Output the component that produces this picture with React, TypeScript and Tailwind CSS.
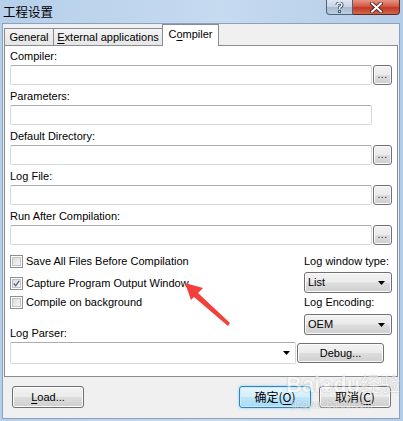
import React from "react";

const btn =
  "rounded-[3px] border border-[#707070] bg-[linear-gradient(#f2f2f2_0%,#ebebeb_48%,#dddddd_52%,#cfcfcf_100%)] shadow-[inset_0_0_0_1px_#fbfbfb]";
const box = "rounded-[2px] border border-[#d5d8dd] border-t-[#abadb3] bg-white";

const Label = ({ text, className = "" }: { text: string; className?: string }) => (
  <div className={`h-[14px] leading-[14px] whitespace-nowrap ${className}`}>{text}</div>
);

const Browse = () => (
  <div className={`${btn} w-[19px] h-[20px] flex items-end justify-center pb-[4px]`}>
    <span className="text-[10px] leading-none tracking-[0.5px] text-[#1a1a1a]">...</span>
  </div>
);

const Field = ({ label, browse = true, first = false }: { label: string; browse?: boolean; first?: boolean }) => (
  <div className={first ? "" : "mt-[4px]"}>
    <Label text={label} className="mb-[2px]" />
    <div className="flex gap-[1px]">
      <div className={`${box} w-[362px] h-[20px]`} />
      {browse && <Browse />}
    </div>
  </div>
);

const Check = ({ label, checked = false, className = "" }: { label: string; checked?: boolean; className?: string }) => (
  <div className={`flex items-center h-[14px] ${className}`}>
    <div className="w-[13px] h-[13px] border border-[#8e8f8f] bg-white p-[1px]">
      <div className="w-full h-full bg-[linear-gradient(135deg,#dcdcdc,#f6f6f6)] border border-[#c2c2c2] flex items-center justify-center">
        {checked && (
          <svg width="9" height="9" viewBox="0 0 9 9">
            <path d="M1 4.5 L3.5 7.5 L8 1" fill="none" stroke="#4a5f8f" strokeWidth="1.6" />
          </svg>
        )}
      </div>
    </div>
    <span className="ml-[3px] leading-[14px] whitespace-nowrap">{label}</span>
  </div>
);

const Arrow = () => (
  <svg width="7" height="4" viewBox="0 0 7 4">
    <path d="M0 0 H7 L3.5 4 Z" fill="#000" />
  </svg>
);

const Select = ({ value, className = "" }: { value: string; className?: string }) => (
  <div className={`${btn} w-[88px] h-[21px] flex items-center justify-between pl-[3px] pr-[6px] ${className}`}>
    <span className="leading-none">{value}</span>
    <Arrow />
  </div>
);

export default function App() {
  return (
    <div className="relative w-[403px] h-[421px] overflow-hidden bg-[linear-gradient(90deg,#b6cfea_0%,#c6daf0_55%,#b3cce8_100%)] text-[11px] text-black font-['Liberation_Sans',Arial,sans-serif]">
      {/* title bar */}
      <div className="h-[23px] flex justify-between pr-[3px]">
        <div className="pl-[3px] pt-[3px] text-[12.5px] leading-[17px] text-black font-['Noto_Sans_CJK_SC',sans-serif]">
          工程设置
        </div>
        <div className="flex h-[15px]">
          <div className="w-[27px] h-full rounded-bl-[4px] border border-t-0 border-[#4f627c] bg-[linear-gradient(#dfe7f0_0%,#c6d3e2_50%,#a9bbd0_52%,#bccde0_100%)] flex items-center justify-center">
            <svg width="9" height="11" viewBox="0 0 9 11">
              <path d="M2 3 Q2 1 4.5 1 Q7 1 7 3 Q7 4.5 4.5 5.5 L4.5 7" fill="none" stroke="#34465e" strokeWidth="3" />
              <path d="M2 3 Q2 1 4.5 1 Q7 1 7 3 Q7 4.5 4.5 5.5 L4.5 7" fill="none" stroke="#ffffff" strokeWidth="1.4" />
              <rect x="3" y="8" width="3" height="3" fill="#34465e" />
              <rect x="3.8" y="8.8" width="1.4" height="1.4" fill="#ffffff" />
            </svg>
          </div>
          <div className="w-[47px] h-full rounded-br-[4px] border border-t-0 border-l-0 border-[#5a2a24] bg-[linear-gradient(#e69584_0%,#d45a43_45%,#c13a27_55%,#d7654b_100%)] flex items-center justify-center">
            <svg width="13" height="11" viewBox="0 0 13 11">
              <path d="M2 1.5 L11 9.5 M11 1.5 L2 9.5" stroke="#3a1a16" strokeWidth="3.6" strokeLinecap="square" />
              <path d="M2 1.5 L11 9.5 M11 1.5 L2 9.5" stroke="#ffffff" strokeWidth="2" strokeLinecap="square" />
            </svg>
          </div>
        </div>
      </div>

      {/* client */}
      <div className="ml-[2px] w-[398px] h-[396px] border border-[#8ba2be] bg-[#f0f0f0] flex flex-col">
        {/* tabs */}
        <div className="h-[21px] flex items-end pl-[1px]">
          <div className="relative h-[17px] w-[50px] border border-b-0 border-[#898c95] bg-[linear-gradient(#f3f3f3,#e6e6e6)] flex items-center justify-center leading-none">
            General
          </div>
          <div className="relative -ml-px h-[17px] w-[110px] border border-b-0 border-[#898c95] bg-[linear-gradient(#f3f3f3,#e6e6e6)] flex items-center justify-center leading-none">
            <span>
              <span className="underline underline-offset-2">E</span>xternal applications
            </span>
          </div>
          <div className="relative z-10 -ml-px -mb-px h-[22px] w-[57px] border border-b-0 border-[#898c95] bg-white flex items-center justify-center leading-none pb-[2px]">
            <span>
              C<span className="underline underline-offset-2">o</span>mpiler
            </span>
          </div>
        </div>

        {/* panel */}
        <div className="ml-[1px] w-[394px] h-[332px] border border-[#898c95] bg-white pl-[5px] pt-[3px]">
          <Field label="Compiler:" first />
          <Field label="Parameters:" browse={false} />
          <Field label="Default Directory:" />
          <Field label="Log File:" />
          <Field label="Run After Compilation:" />

          <div className="flex mt-[9px]">
            <div className="w-[294px] flex flex-col">
              <Check label="Save All Files Before Compilation" />
              <Check label="Capture Program Output Window" checked className="mt-[8px]" />
              <Check label="Compile on background" className="mt-[5px]" />
              <Label text="Log Parser:" className="mt-[17px]" />
            </div>
            <div className="w-[88px] flex flex-col">
              <Label text="Log window type:" />
              <Select value="List" className="mt-[4px]" />
              <Label text="Log Encoding:" className="mt-[2px]" />
              <Select value="OEM" className="mt-[5px]" />
            </div>
          </div>

          <div className="flex items-start gap-[1px] mt-[2px]">
            <div className={`${box} w-[286px] h-[22px] flex items-center justify-end pr-[5px]`}>
              <Arrow />
            </div>
            <div className={`${btn} mt-[1px] w-[87px] h-[20px] flex items-center justify-center`}>Debug...</div>
          </div>
        </div>

        {/* dialog buttons */}
        <div className="mt-[9px] flex items-center pl-[9px] pr-[8px]">
          <div className={`${btn} w-[72px] h-[22px] flex items-center justify-center`}>
            <span>
              <span className="underline underline-offset-2">L</span>oad...
            </span>
          </div>
          <div className="flex-1" />
          <div className="w-[72px] h-[22px] rounded-[3px] border border-[#3c7fb1] bg-[linear-gradient(#e6f5fd_0%,#d4eefb_48%,#bde5fa_52%,#a8dbf5_100%)] shadow-[inset_0_0_0_1px_#c9ecfd,0_0_3px_#7fd0f5] flex items-center justify-center text-[12px] font-['Noto_Sans_CJK_SC',sans-serif]">
            <span>
              确定(<span className="underline underline-offset-2">O</span>)
            </span>
          </div>
          <div className={`${btn} ml-[8px] w-[72px] h-[22px] flex items-center justify-center text-[12px] font-['Noto_Sans_CJK_SC',sans-serif]`}>
            <span>
              取消(<span className="underline underline-offset-2">C</span>)
            </span>
          </div>
        </div>
      </div>

      {/* watermark */}
      <div className="absolute left-[286px] top-[372px] pointer-events-none select-none opacity-50 text-white [text-shadow:0_0_1px_#8a8a8a,0_0_1px_#8a8a8a]">
        <div className="text-[22px] leading-[24px] font-bold font-['Liberation_Sans',sans-serif]">
          Bai<span className="text-[16px]">❀</span>du<span className="font-['Noto_Sans_CJK_SC',sans-serif] text-[20px] font-normal">经验</span>
        </div>
        <div className="text-[10px] leading-[12px] pl-[6px]">jingyan.baidu.com</div>
      </div>

      {/* annotation arrow */}
      <svg className="absolute left-0 top-0 pointer-events-none" width="403" height="421" viewBox="0 0 403 421">
        <polygon points="185,283 203,288 198,293 230,323 228,326 194,297 191,300" fill="#f4403a" />
      </svg>
    </div>
  );
}
